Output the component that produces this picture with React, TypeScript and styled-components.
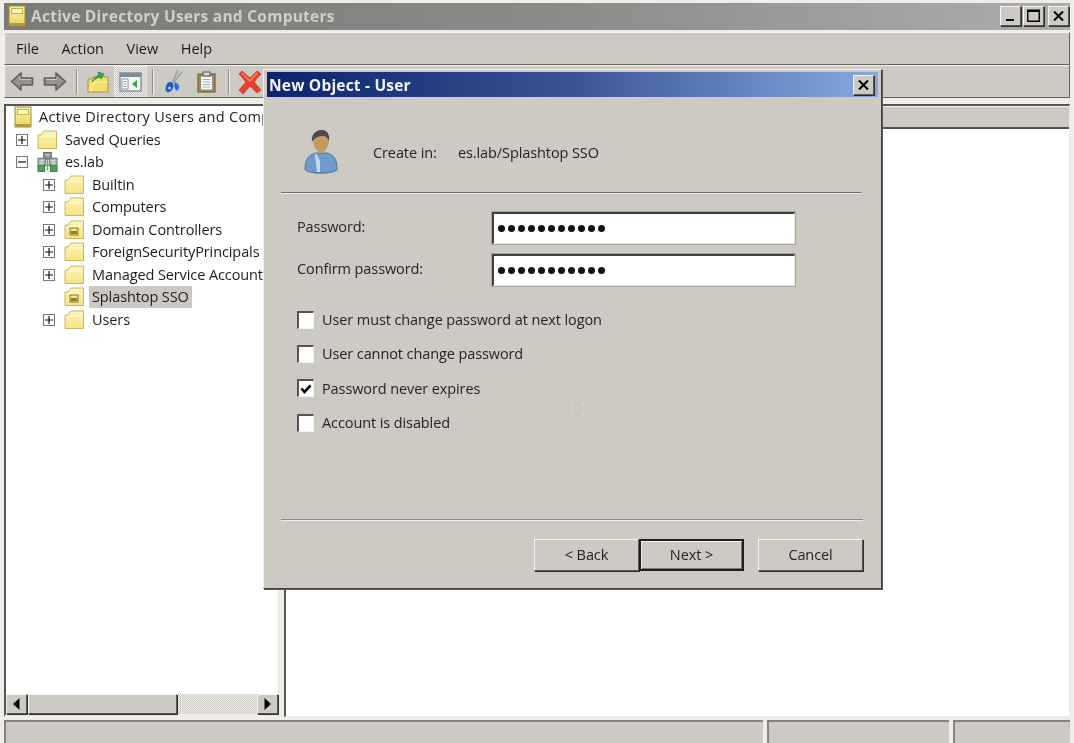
import React from 'react';
import styled, { createGlobalStyle, css } from 'styled-components';

const Global = createGlobalStyle`
  html, body { margin: 0; padding: 0; background: #f4f3ef; }
  body { font-family: "Open Sans", "Noto Sans", sans-serif; color: #1c1c1c; }
  * { box-sizing: border-box; }
`;

const raised = css`
  border: 1px solid;
  border-color: #f6f5f1 #5a5955 #5a5955 #f6f5f1;
  box-shadow: 1px 1px 0 #2e2e2c;
  background: #cdcac3;
`;

const sunken = css`
  border-top: 2px solid #55544f;
  border-left: 2px solid #55544f;
  border-right: 1px solid #e9e8e3;
  border-bottom: 1px solid #e9e8e3;
`;

const Page = styled.div`
  position: relative;
  width: 1074px;
  height: 743px;
  overflow: hidden;
  padding: 3px 4px 0 4px;
  display: flex;
  flex-direction: column;
  background: #eeede8;
  filter: blur(0.45px);
`;

const TitleBar = styled.div`
  height: 27px;
  flex: none;
  display: flex;
  align-items: center;
  padding: 0 1px 2px 4px;
  background: linear-gradient(90deg, #7a7a78 0%, #8a8987 50%, #aeacb0 100%);
`;

const TitleText = styled.span`
  flex: 1;
  margin-left: 5px;
  font-size: 15.5px;
  font-weight: 700;
  color: #d0cfc9;
  letter-spacing: 0.25px;
`;

const Caption = styled.button<{ $gap?: number }>`
  ${raised}
  width: 21px;
  height: 20px;
  padding: 0;
  margin-left: ${p => p.$gap ?? 0}px;
  display: flex;
  align-items: center;
  justify-content: center;
  color: #000;
`;

const Bar = styled.div`
  flex: none;
  display: flex;
  align-items: center;
  border: 1px solid;
  border-color: #f3f2ee #62615d #62615d #f3f2ee;
  background: #cdcac3;
`;

const MenuBar = styled(Bar)`
  height: 33px;
  margin-top: 2px;
  padding-left: 11px;
  gap: 22.5px;
  font-size: 14.5px;
`;

const ToolBar = styled(Bar)`
  height: 33px;
  border-top: 1px solid #f3f2ee;
`;

const ToolButton = styled.span<{ $on?: boolean }>`
  width: 33px;
  height: 31px;
  flex: none;
  display: flex;
  align-items: center;
  justify-content: center;
  ${p => p.$on && css`
    background: repeating-conic-gradient(#eeeeea 0 25%, #c8c6c0 0 50%) 0 0 / 2px 2px;
    border: 1px solid #e8e7e2;
  `}
`;

const ToolSep = styled.span`
  width: 2px;
  height: 25px;
  flex: none;
  margin: 0 3px 0 5px;
  background: linear-gradient(90deg, #8d8c87 50%, #f3f2ee 50%);
`;

const Panes = styled.div`
  flex: 1;
  min-height: 0;
  margin-top: 6px;
  display: flex;
  gap: 5px;
`;

const TreePane = styled.div`
  ${sunken}
  border-bottom: 3px solid #eeede8;
  width: 275px;
  flex: none;
  display: flex;
  flex-direction: column;
  background: #fff;
`;

const Tree = styled.div`
  flex: 1;
  background: #fff;
  overflow: hidden;
  letter-spacing: -0.1px;
`;

const Row = styled.div<{ $indent: number }>`
  height: 22.5px;
  display: flex;
  align-items: center;
  padding-left: ${p => p.$indent}px;
  font-size: 14.5px;
  white-space: nowrap;
`;

const Expander = styled.span`
  width: 12px;
  height: 12px;
  flex: none;
  border: 1px solid #77766f;
  display: flex;
  align-items: center;
  justify-content: center;
  background: #fff;
`;

const ExpanderSlot = styled.span`
  width: 12px;
  flex: none;
`;

const NodeIcon = styled.span`
  width: 21px;
  height: 20px;
  flex: none;
  margin: 0 4px 0 9px;
  display: flex;
  align-items: center;
  justify-content: center;
`;

const RootIcon = styled(NodeIcon)`
  margin: 0 3px 0 0;
`;

const Label = styled.span<{ $selected?: boolean }>`
  padding: 1px 3px 2px 3px;
  ${p => p.$selected && 'background: #ccc9c4;'}
`;

const RootLabel = styled(Label)`
  letter-spacing: 0.3px;
`;

const ScrollBar = styled.div`
  height: 20px;
  flex: none;
  display: flex;
  background: repeating-conic-gradient(#f2f1ed 0 25%, #c9c7c0 0 50%) 0 0 / 2px 2px;
`;

const ScrollButton = styled.span`
  ${raised}
  width: 21px;
  flex: none;
  display: flex;
  align-items: center;
  justify-content: center;
`;

const Thumb = styled.span`
  ${raised}
  width: 149px;
  margin: 0 auto 0 1px;
`;

const RightPane = styled.div`
  ${sunken}
  flex: 1;
  display: flex;
  flex-direction: column;
  background: #fff;
`;

const ListHeader = styled.div`
  height: 23px;
  flex: none;
  background: #cdcac3;
  border-top: 1px solid #f3f2ee;
  border-bottom: 2px solid #55544f;
`;

const StatusBar = styled.div`
  height: 23px;
  flex: none;
  margin-top: 3px;
  display: flex;
  gap: 4px;
`;

const StatusCell = styled.div<{ $w?: number }>`
  ${p => (p.$w ? `width: ${p.$w}px; flex: none;` : 'flex: 1;')}
  background: #cdcac3;
  border-top: 2px solid #84837e;
  border-left: 2px solid #84837e;
`;

const Dialog = styled.div`
  position: absolute;
  left: 263px;
  top: 69px;
  width: 619px;
  height: 520px;
  padding: 2px 3px 3px 3px;
  display: flex;
  flex-direction: column;
  background: #cdcac3;
  border: 1px solid;
  border-color: #eeede8 #44433f #44433f #eeede8;
  box-shadow: 1px 1px 0 #5c5b57;
`;

const DialogTitle = styled.div`
  height: 25px;
  flex: none;
  display: flex;
  align-items: center;
  justify-content: space-between;
  padding: 0 4px 0 2px;
  background: linear-gradient(90deg, #0b236b 0%, #3a5596 50%, #87a8e2 100%);
  color: #f2f4fa;
  font-size: 15.5px;
  font-weight: 700;
  letter-spacing: 0.2px;
`;

const DialogBody = styled.div`
  flex: 1;
  display: flex;
  flex-direction: column;
  padding: 0 17px 0 14px;
  font-size: 14.5px;
  letter-spacing: -0.1px;
  color: #242424;
`;

const Head = styled.div`
  height: 96px;
  flex: none;
  display: flex;
  align-items: center;
  padding: 15px 0 0 22px;
  border-bottom: 1px solid #6f6e69;
  box-shadow: 0 1px 0 #f0efea;
`;

const CreateLabel = styled.span`
  width: 85px;
  margin-left: 34px;
`;

const Fields = styled.div`
  display: grid;
  grid-template-columns: 196px 303px;
  grid-auto-rows: 32px;
  row-gap: 10px;
  padding: 19px 0 0 15px;
  align-items: center;
`;

const FieldLabel = styled.span`
  padding: 0 0 4px 1px;
`;

const PasswordBox = styled.div`
  height: 32px;
  padding-left: 4px;
  display: flex;
  align-items: center;
  gap: 3px;
  background: #fff;
  border: 1px solid;
  border-color: #3f3e3a #e6e5e0 #e6e5e0 #3f3e3a;
  border-top-width: 2px;
  border-left-width: 2px;
  outline: 1px solid #a7a5a0;
`;

const Dot = styled.i`
  width: 7px;
  height: 7px;
  flex: none;
  border-radius: 50%;
  background: #111;
`;

const Checks = styled.div`
  display: flex;
  flex-direction: column;
  gap: 15.4px;
  padding: 24px 0 0 16px;
`;

const CheckRow = styled.label`
  height: 19px;
  display: flex;
  align-items: center;
  gap: 8px;
`;

const Box = styled.span`
  width: 17px;
  height: 18px;
  flex: none;
  display: flex;
  align-items: center;
  justify-content: center;
  background: #fff;
  border: 1px solid;
  border-color: #55544f #f4f3ef #f4f3ef #55544f;
  border-top-width: 2px;
  border-left-width: 2px;
`;

const Specks = styled.svg`
  position: absolute;
  left: 571px;
  top: 402px;
`;

const FootRule = styled.div`
  margin-top: auto;
  height: 2px;
  margin-right: -2px;
  background: linear-gradient(#8b8a85 50%, #f0efea 50%);
`;

const Buttons = styled.div`
  height: 64px;
  flex: none;
  display: flex;
  justify-content: flex-end;
  padding-top: 18px;
  margin-right: -2px;
`;

const Button = styled.button<{ $default?: boolean; $gap?: boolean }>`
  ${raised}
  width: 105px;
  height: 32px;
  padding: 0 0 2px;
  font: inherit;
  letter-spacing: inherit;
  color: #242424;
  ${p => p.$gap && 'margin-left: 14px;'}
  ${p => p.$default && css`
    border: 2px solid #1d1d1b;
    box-shadow: inset 1px 1px 0 #f6f5f1, inset -1px -1px 0 #77766f;
  `}
`;

/* ---------- drawings ---------- */

const Book = () => (
  <svg width="18" height="22" viewBox="0 0 18 22">
    <defs>
      <linearGradient id="bookFill" x1="0" y1="0" x2="0" y2="1">
        <stop offset="0" stopColor="#fbf3a6" />
        <stop offset="1" stopColor="#e8d466" />
      </linearGradient>
    </defs>
    <rect x="1" y="1" width="16" height="20" fill="url(#bookFill)" stroke="#a08c32" />
    <rect x="1.500" y="18" width="15" height="3" fill="#b39a3a" />
    <rect x="3.500" y="3.500" width="11" height="5" fill="#fdf8c8" stroke="#c4ae4e" />
  </svg>
);

const Folder = ({ ou }: { ou?: boolean }) => (
  <svg width="21" height="20" viewBox="0 0 21 20">
    <defs>
      <linearGradient id="folderFill" x1="0" y1="0" x2="0" y2="1">
        <stop offset="0" stopColor="#fff6b8" />
        <stop offset="1" stopColor="#f6e281" />
      </linearGradient>
    </defs>
    <path d="M1 5h3l3-4h12.500v17.500H1z" fill="url(#folderFill)" stroke="#c9b566" />
    <path d="M4.500 6h14" stroke="#fffbe0" fill="none" />
    {ou && (
      <g>
        <rect x="6" y="8" width="8" height="7" fill="#f2e08a" stroke="#8a7a2c" />
        <rect x="7" y="11" width="6" height="3" fill="#8f8128" />
      </g>
    )}
  </svg>
);

const Domain = () => (
  <svg width="22" height="22" viewBox="0 0 22 22">
    <rect x="7" y="1" width="8" height="7" fill="#8f9a94" stroke="#5f6a66" />
    <rect x="1" y="7" width="8" height="8" fill="#a9b3ae" stroke="#6a7571" />
    <rect x="13" y="7" width="8" height="8" fill="#a9b3ae" stroke="#6a7571" />
    <rect x="1" y="15" width="7" height="6" fill="#55a05e" stroke="#3d7a48" />
    <rect x="14" y="15" width="7" height="6" fill="#55a05e" stroke="#3d7a48" />
    <path d="M11 8v6M7 13l4 2 4-2M11 15v5" stroke="#4fb15a" strokeWidth="1.500" fill="none" />
    <path d="M3 9.500h4M15 9.500h4M3 12h4M15 12h4M9 3.500h4" stroke="#e4e8e4" />
  </svg>
);

const ArrowShape = styled.svg<{ $flip?: boolean }>`
  ${p => p.$flip && 'transform: scaleX(-1);'}
`;

const Arrow = ({ flip }: { flip?: boolean }) => (
  <ArrowShape $flip={flip} width="24" height="21" viewBox="0 0 24 21">
    <path d="M1.500 10.500 11 2v5h11.500v7H11v5z" fill="#94928d" stroke="#5f5e5a" strokeWidth="1.600" strokeLinejoin="round" />
    <path d="M10 5.500v3h11" stroke="#c8c6c1" fill="none" />
  </ArrowShape>
);

const UpFolder = () => (
  <svg width="22" height="22" viewBox="0 0 22 22">
    <path d="M1 8h4l1-2h15v15H1z" fill="#f3df70" stroke="#a7903a" />
    <path d="M4 21l3-10h14" fill="none" stroke="#fff2a8" />
    <path d="M5 11c2-4 4-6 7-7l-1-3 6 2-3 5-1-2c-3 1-5 2-8 5z" fill="#2fa84a" stroke="#1c7a33" strokeWidth=".6" />
  </svg>
);

const ConsoleTree = () => (
  <svg width="23" height="20" viewBox="0 0 23 20">
    <rect x="1" y="1" width="21" height="18" fill="#f5f5f2" stroke="#5c6c7a" />
    <rect x="1" y="1" width="21" height="4" fill="#7d8c98" />
    <rect x="3" y="7" width="6" height="10" fill="#fff" stroke="#8a96a0" />
    <path d="M4.500 9.500h3M4.500 12h3M4.500 14.500h3" stroke="#8a96a0" />
    <path d="M18 8v8l-5-4z" fill="#2ca94f" />
  </svg>
);

const Scissors = () => (
  <svg width="18" height="25" viewBox="0 0 18 25">
    <path d="M13 1 7 14M17 3 8 14" stroke="#9aa2ac" strokeWidth="1.600" fill="none" />
    <path d="M5 13c3 0 4 3 3 6s-4 5-6 4-2-3-1-6 2-4 4-4z" fill="#1f5fc4" />
    <path d="M10 13c2 1 5 3 4 6s-3 3-4 1-1-5 0-7z" fill="#2a6fd8" />
    <circle cx="4.500" cy="19" r="1.300" fill="#d8e4f6" />
  </svg>
);

const Clipboard = () => (
  <svg width="19" height="22" viewBox="0 0 19 22">
    <rect x="1" y="3" width="17" height="18" fill="#b08a52" stroke="#6a4f28" />
    <rect x="3.500" y="5" width="12" height="14" fill="#fbfbf6" stroke="#8f8a78" />
    <rect x="6" y="1" width="7" height="4" fill="#d6d3c8" stroke="#5f5e58" />
    <path d="M5.500 8.500h8M5.500 11h8M5.500 13.500h8M5.500 16h8" stroke="#9fb0c4" />
  </svg>
);

const RedX = () => (
  <svg width="24" height="24" viewBox="0 0 24 24">
    <path d="M4 1 12 8l7-7 4 3-7 8 7 8-4 3-7-7-7 8-4-4 7-8-7-8z" fill="#e8402a" stroke="#b52c1c" strokeWidth=".6" />
    <path d="M4 3 12 11l7-8" stroke="#ff8a70" strokeWidth="1.200" fill="none" />
  </svg>
);

const CloseGlyph = () => (
  <svg width="11" height="10" viewBox="0 0 11 10">
    <path d="M1 .5 10 9.500M10 .5 1 9.500" stroke="#000" strokeWidth="2" />
  </svg>
);

const MinGlyph = () => (
  <svg width="11" height="10" viewBox="0 0 11 10">
    <rect x="1" y="8" width="8" height="2.200" fill="#000" />
  </svg>
);

const MaxGlyph = () => (
  <svg width="13" height="13" viewBox="0 0 13 13">
    <path d="M.75 2h11.500v10.250H.75z" fill="none" stroke="#000" strokeWidth="1.400" />
    <rect x="0" y=".5" width="13" height="2.500" fill="#000" />
  </svg>
);

const Plus = () => (
  <svg width="8" height="8" viewBox="0 0 8 8">
    <path d="M0 4h8M4 0v8" stroke="#111" strokeWidth="1.200" />
  </svg>
);

const Minus = () => (
  <svg width="8" height="8" viewBox="0 0 8 8">
    <path d="M0 4h8" stroke="#111" strokeWidth="1.200" />
  </svg>
);

const UserFigure = () => (
  <svg width="36" height="46" viewBox="0 0 36 46">
    <ellipse cx="18" cy="40" rx="17" ry="5" fill="#8d8b86" opacity=".5" />
    <path d="M2 39c0-9 5-14 11-15h10c7 1 11 6 11 15 0 3-5 5-16 5S2 42 2 39z" fill="#6f9ccb" stroke="#4c76a6" />
    <path d="M13 24l4 8v11h-3l-2-18z" fill="#c6dbef" />
    <path d="M10 10c0-6 4-9 8-9s8 3 8 9-3 13-8 14c-5-1-8-8-8-14z" fill="#c79a63" />
    <path d="M9 13c-1-8 4-12 10-12 5 0 8 4 7 11-1-3-3-5-6-5-4 0-8 1-11 6z" fill="#4a4a48" />
  </svg>
);

const Check = () => (
  <svg width="12" height="10" viewBox="0 0 12 10">
    <path d="M1.500 4.500 4.500 8 10.500 1.500" fill="none" stroke="#000" strokeWidth="2.600" />
  </svg>
);

const ArrowLeft = () => (
  <svg width="7" height="12" viewBox="0 0 7 12"><path d="M6.500 0v12L0 6z" fill="#000" /></svg>
);

const ArrowRight = () => (
  <svg width="7" height="12" viewBox="0 0 7 12"><path d="M.5 0v12L7 6z" fill="#000" /></svg>
);

/* ---------- data ---------- */

const nodes = [
  { indent: 10, state: 'plus', kind: 'folder', text: 'Saved Queries' },
  { indent: 10, state: 'minus', kind: 'domain', text: 'es.lab' },
  { indent: 37, state: 'plus', kind: 'folder', text: 'Builtin' },
  { indent: 37, state: 'plus', kind: 'folder', text: 'Computers' },
  { indent: 37, state: 'plus', kind: 'ou', text: 'Domain Controllers' },
  { indent: 37, state: 'plus', kind: 'folder', text: 'ForeignSecurityPrincipals' },
  { indent: 37, state: 'plus', kind: 'folder', text: 'Managed Service Accounts' },
  { indent: 37, state: 'none', kind: 'ou', text: 'Splashtop SSO', selected: true },
  { indent: 37, state: 'plus', kind: 'folder', text: 'Users' },
];

const options = [
  { text: 'User must change password at next logon', checked: false },
  { text: 'User cannot change password', checked: false },
  { text: 'Password never expires', checked: true },
  { text: 'Account is disabled', checked: false },
];

const Secret = () => (
  <PasswordBox>
    {Array.from({ length: 11 }).map((_, i) => <Dot key={i} />)}
  </PasswordBox>
);

export default function App() {
  return (
    <Page>
      <Global />
      <TitleBar>
        <Book />
        <TitleText>Active Directory Users and Computers</TitleText>
        <Caption><MinGlyph /></Caption>
        <Caption $gap={2}><MaxGlyph /></Caption>
        <Caption $gap={4}><CloseGlyph /></Caption>
      </TitleBar>
      <MenuBar>
        <span>File</span>
        <span>Action</span>
        <span>View</span>
        <span>Help</span>
      </MenuBar>
      <ToolBar>
        <ToolButton><Arrow /></ToolButton>
        <ToolButton><Arrow flip /></ToolButton>
        <ToolSep />
        <ToolButton><UpFolder /></ToolButton>
        <ToolButton $on><ConsoleTree /></ToolButton>
        <ToolSep />
        <ToolButton><Scissors /></ToolButton>
        <ToolButton><Clipboard /></ToolButton>
        <ToolSep />
        <ToolButton><RedX /></ToolButton>
      </ToolBar>
      <Panes>
        <TreePane>
          <Tree>
            <Row $indent={6}>
              <RootIcon><Book /></RootIcon>
              <RootLabel>Active Directory Users and Computers</RootLabel>
            </Row>
            {nodes.map(n => (
              <Row key={n.text} $indent={n.indent}>
                {n.state === 'none' ? <ExpanderSlot /> : (
                  <Expander>{n.state === 'plus' ? <Plus /> : <Minus />}</Expander>
                )}
                <NodeIcon>
                  {n.kind === 'domain' ? <Domain /> : <Folder ou={n.kind === 'ou'} />}
                </NodeIcon>
                <Label $selected={n.selected}>{n.text}</Label>
              </Row>
            ))}
          </Tree>
          <ScrollBar>
            <ScrollButton><ArrowLeft /></ScrollButton>
            <Thumb />
            <ScrollButton><ArrowRight /></ScrollButton>
          </ScrollBar>
        </TreePane>
        <RightPane>
          <ListHeader />
        </RightPane>
      </Panes>
      <StatusBar>
        <StatusCell />
        <StatusCell $w={182} />
        <StatusCell $w={117} />
      </StatusBar>

      <Dialog>
        <DialogTitle>
          New Object - User
          <Caption><CloseGlyph /></Caption>
        </DialogTitle>
        <DialogBody>
          <Head>
            <UserFigure />
            <CreateLabel>Create in:</CreateLabel>
            <span>es.lab/Splashtop SSO</span>
          </Head>
          <Fields>
            <FieldLabel>Password:</FieldLabel>
            <Secret />
            <FieldLabel>Confirm password:</FieldLabel>
            <Secret />
          </Fields>
          <Checks>
            {options.map(o => (
              <CheckRow key={o.text}>
                <Box>{o.checked && <Check />}</Box>
                {o.text}
              </CheckRow>
            ))}
          </Checks>
          <FootRule />
          <Buttons>
            <Button>&lt; Back</Button>
            <Button $default>Next &gt;</Button>
            <Button $gap>Cancel</Button>
          </Buttons>
        </DialogBody>
      </Dialog>
      <Specks width="14" height="14" viewBox="0 0 14 14">
        <path d="M1 1h1v1H1zM12 1h1v1h-1zM1 12h1v1H1zM12 12h1v1h-1z" fill="#f2f1ec" />
      </Specks>
    </Page>
  );
}
